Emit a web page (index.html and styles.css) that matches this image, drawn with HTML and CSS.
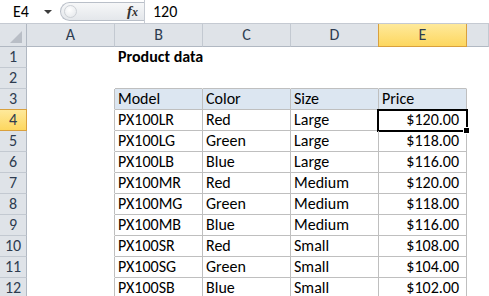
FILE: index.html
```html
<!DOCTYPE html>
<html lang="en">
<head>
    <meta charset="UTF-8">
    <title>Product data</title>
    <link rel="stylesheet" href="styles.css">
</head>
<body>
    <div class="formula-bar">
        <div class="name-box">
            <span>E4</span>
            <span class="drop-arrow"></span>
        </div>
        <div class="fx-group">
            <span class="grip"></span>
            <i class="fx">f<span>x</span></i>
        </div>
        <div class="formula-input">120</div>
    </div>

    <div class="sheet">
        <div class="cell corner"></div>
        <div class="cell col-head">A</div>
        <div class="cell col-head">B</div>
        <div class="cell col-head">C</div>
        <div class="cell col-head">D</div>
        <div class="cell col-head sel">E</div>
        <div class="cell col-head"></div>

        <div class="cell row-head">1</div>
        <div class="cell"></div>
        <div class="cell title">Product data</div>
        <div class="cell"></div>
        <div class="cell"></div>
        <div class="cell"></div>
        <div class="cell"></div>

        <div class="cell row-head">2</div>
        <div class="cell"></div>
        <div class="cell edge-b"></div>
        <div class="cell edge-b"></div>
        <div class="cell edge-b"></div>
        <div class="cell edge-b"></div>
        <div class="cell"></div>

        <div class="cell row-head">3</div>
        <div class="cell edge-r"></div>
        <div class="cell t th">Model</div>
        <div class="cell t th">Color</div>
        <div class="cell t th">Size</div>
        <div class="cell t th">Price</div>
        <div class="cell"></div>

        <div class="cell row-head sel">4</div>
        <div class="cell edge-r"></div>
        <div class="cell t">PX100LR</div>
        <div class="cell t">Red</div>
        <div class="cell t">Large</div>
        <div class="cell t num active">$120.00</div>
        <div class="cell"></div>

        <div class="cell row-head">5</div>
        <div class="cell edge-r"></div>
        <div class="cell t">PX100LG</div>
        <div class="cell t">Green</div>
        <div class="cell t">Large</div>
        <div class="cell t num">$118.00</div>
        <div class="cell"></div>

        <div class="cell row-head">6</div>
        <div class="cell edge-r"></div>
        <div class="cell t">PX100LB</div>
        <div class="cell t">Blue</div>
        <div class="cell t">Large</div>
        <div class="cell t num">$116.00</div>
        <div class="cell"></div>

        <div class="cell row-head">7</div>
        <div class="cell edge-r"></div>
        <div class="cell t">PX100MR</div>
        <div class="cell t">Red</div>
        <div class="cell t">Medium</div>
        <div class="cell t num">$120.00</div>
        <div class="cell"></div>

        <div class="cell row-head">8</div>
        <div class="cell edge-r"></div>
        <div class="cell t">PX100MG</div>
        <div class="cell t">Green</div>
        <div class="cell t">Medium</div>
        <div class="cell t num">$118.00</div>
        <div class="cell"></div>

        <div class="cell row-head">9</div>
        <div class="cell edge-r"></div>
        <div class="cell t">PX100MB</div>
        <div class="cell t">Blue</div>
        <div class="cell t">Medium</div>
        <div class="cell t num">$116.00</div>
        <div class="cell"></div>

        <div class="cell row-head">10</div>
        <div class="cell edge-r"></div>
        <div class="cell t">PX100SR</div>
        <div class="cell t">Red</div>
        <div class="cell t">Small</div>
        <div class="cell t num">$108.00</div>
        <div class="cell"></div>

        <div class="cell row-head">11</div>
        <div class="cell edge-r"></div>
        <div class="cell t">PX100SG</div>
        <div class="cell t">Green</div>
        <div class="cell t">Small</div>
        <div class="cell t num">$104.00</div>
        <div class="cell"></div>

        <div class="cell row-head">12</div>
        <div class="cell edge-r"></div>
        <div class="cell t">PX100SB</div>
        <div class="cell t">Blue</div>
        <div class="cell t">Small</div>
        <div class="cell t num">$102.00</div>
        <div class="cell"></div>
    </div>
</body>
</html>
```

FILE: styles.css
```css
body {
    margin: 0;
    width: 489px;
    height: 296px;
    overflow: hidden;
    background: #fff;
    font-family: Carlito, Lato, sans-serif;
    font-size: 16px;
    color: #000;
}

/* formula bar */
.formula-bar {
    display: flex;
    align-items: center;
    height: 24px;
    box-sizing: border-box;
    border-bottom: 1px solid #c5cad2;
}
.name-box {
    display: flex;
    align-items: center;
    width: 60px;
    height: 100%;
    box-sizing: border-box;
    padding-left: 13px;
}
.drop-arrow {
    margin-left: auto;
    margin-right: 8px;
    border-left: 4px solid transparent;
    border-right: 4px solid transparent;
    border-top: 4px solid #3c3c3c;
}
.fx-group {
    display: flex;
    align-items: center;
    width: 84px;
    height: 19px;
    box-sizing: border-box;
    border: 1px solid #b9bfc8;
    border-right: none;
    border-radius: 10px 0 0 10px;
    background: linear-gradient(#f6f7f8, #e4e7eb);
}
.grip {
    width: 11px;
    height: 11px;
    margin-left: 3px;
    border-radius: 50%;
    border: 1px solid #cdd1d6;
    background: radial-gradient(circle at 40% 35%, #ffffff, #e2e5e9);
}
.fx {
    margin-left: auto;
    margin-right: 6px;
    font-family: "Liberation Serif", serif;
    font-size: 15px;
    font-weight: bold;
    color: #333;
}
.fx span {
    font-size: 12px;
}
.formula-input {
    display: flex;
    align-items: center;
    height: 100%;
    padding-left: 8px;
    border-left: 1px solid #c5cad2;
}

/* grid */
.sheet {
    display: grid;
    grid-template-columns: 27px repeat(5, 88px) 1fr;
    grid-template-rows: 23px;
    grid-auto-rows: 21px;
}
.cell {
    position: relative;
    display: flex;
    align-items: center;
    box-sizing: border-box;
    padding: 0 3px;
    border-right: 1px solid transparent;
    border-bottom: 1px solid transparent;
    white-space: nowrap;
    line-height: 20px;
}
.col-head,
.row-head,
.corner {
    justify-content: center;
    padding: 0;
    background: #dfe3e8;
    border-color: #b1b8c2;
    color: #2e3c50;
}
.col-head {
    border-right-color: #c3c9d1;
}
.row-head {
    border-bottom-color: #c3c9d1;
}
.corner::after {
    content: "";
    position: absolute;
    right: 4px;
    bottom: 3px;
    border-left: 12px solid transparent;
    border-bottom: 12px solid #b9bec6;
}
.sel {
    background: linear-gradient(#fee99b, #fdd75f);
    border-color: #d9a03d;
}
.col-head.sel {
    box-shadow: -1px 0 0 #d9a03d;
}
.row-head.sel {
    box-shadow: 0 -1px 0 #d9a03d;
}

.title {
    font-weight: bold;
    overflow: visible;
}
.edge-b {
    border-bottom-color: #bfbfbf;
}
.edge-r {
    border-right-color: #bfbfbf;
}
.t {
    border-color: #bfbfbf;
}
.th {
    background: #dce6f1;
}
.num {
    justify-content: flex-end;
    padding-right: 7px;
}
.active::after {
    content: "";
    position: absolute;
    left: -2px;
    top: -1px;
    width: 91px;
    height: 23px;
    box-sizing: border-box;
    border: 2px solid #000;
}
.active::before {
    content: "";
    position: absolute;
    right: -4px;
    bottom: -4px;
    width: 5px;
    height: 5px;
    background: #000;
    border: 1px solid #fff;
    z-index: 1;
}
```
